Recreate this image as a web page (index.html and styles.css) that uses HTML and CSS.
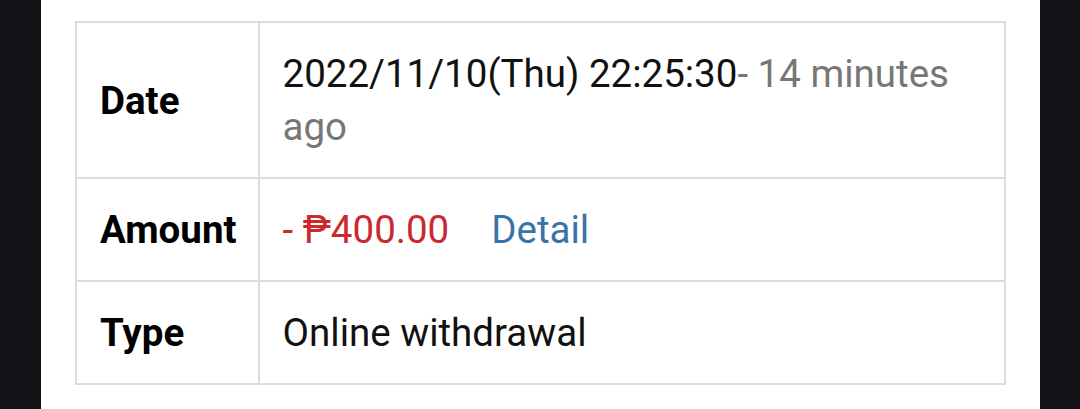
FILE: index.html
```html
<!DOCTYPE html>
<html lang="en">
<head>
    <meta charset="UTF-8">
    <meta name="viewport" content="width=device-width, initial-scale=1.0">
    <title>Transaction Detail</title>
    <link rel="stylesheet" href="styles.css">
</head>
<body>
    <div class="panel">
        <table class="detail-table">
            <tr>
                <th>Date</th>
                <td>2022/11/10(Thu) 22:25:30<span class="ago">- 14 minutes ago</span></td>
            </tr>
            <tr>
                <th>Amount</th>
                <td><span class="amount">- ₱400.00</span><a class="detail-link" href="#">Detail</a></td>
            </tr>
            <tr>
                <th>Type</th>
                <td>Online withdrawal</td>
            </tr>
        </table>
    </div>
</body>
</html>
```

FILE: styles.css
```css
body {
    margin: 0;
    padding: 0;
    background-color: #141116;
    font-family: Roboto, "Liberation Sans", sans-serif;
    height: 100vh;
}
.panel {
    margin-left: 41px;
    width: 999px;
    height: 100%;
    background-color: #ffffff;
    padding: 21px 0 0 34px;
    box-sizing: border-box;
}
.detail-table {
    width: 931px;
    border-collapse: collapse;
    border: 2px solid #dcdcdc;
    font-size: 38.5px;
    line-height: 53px;
    color: #111;
}
.detail-table th,
.detail-table td {
    border: 2px solid #dcdcdc;
    padding: 24px 23px;
    text-align: left;
    vertical-align: middle;
}
.detail-table th {
    width: 135px;
    padding-left: 23px;
    padding-right: 21px;
    font-weight: 700;
    color: #000;
}
.ago {
    color: #777;
}
.amount {
    color: #c9292f;
}
.detail-link {
    color: #3a73a8;
    text-decoration: none;
    margin-left: 42px;
}
```
